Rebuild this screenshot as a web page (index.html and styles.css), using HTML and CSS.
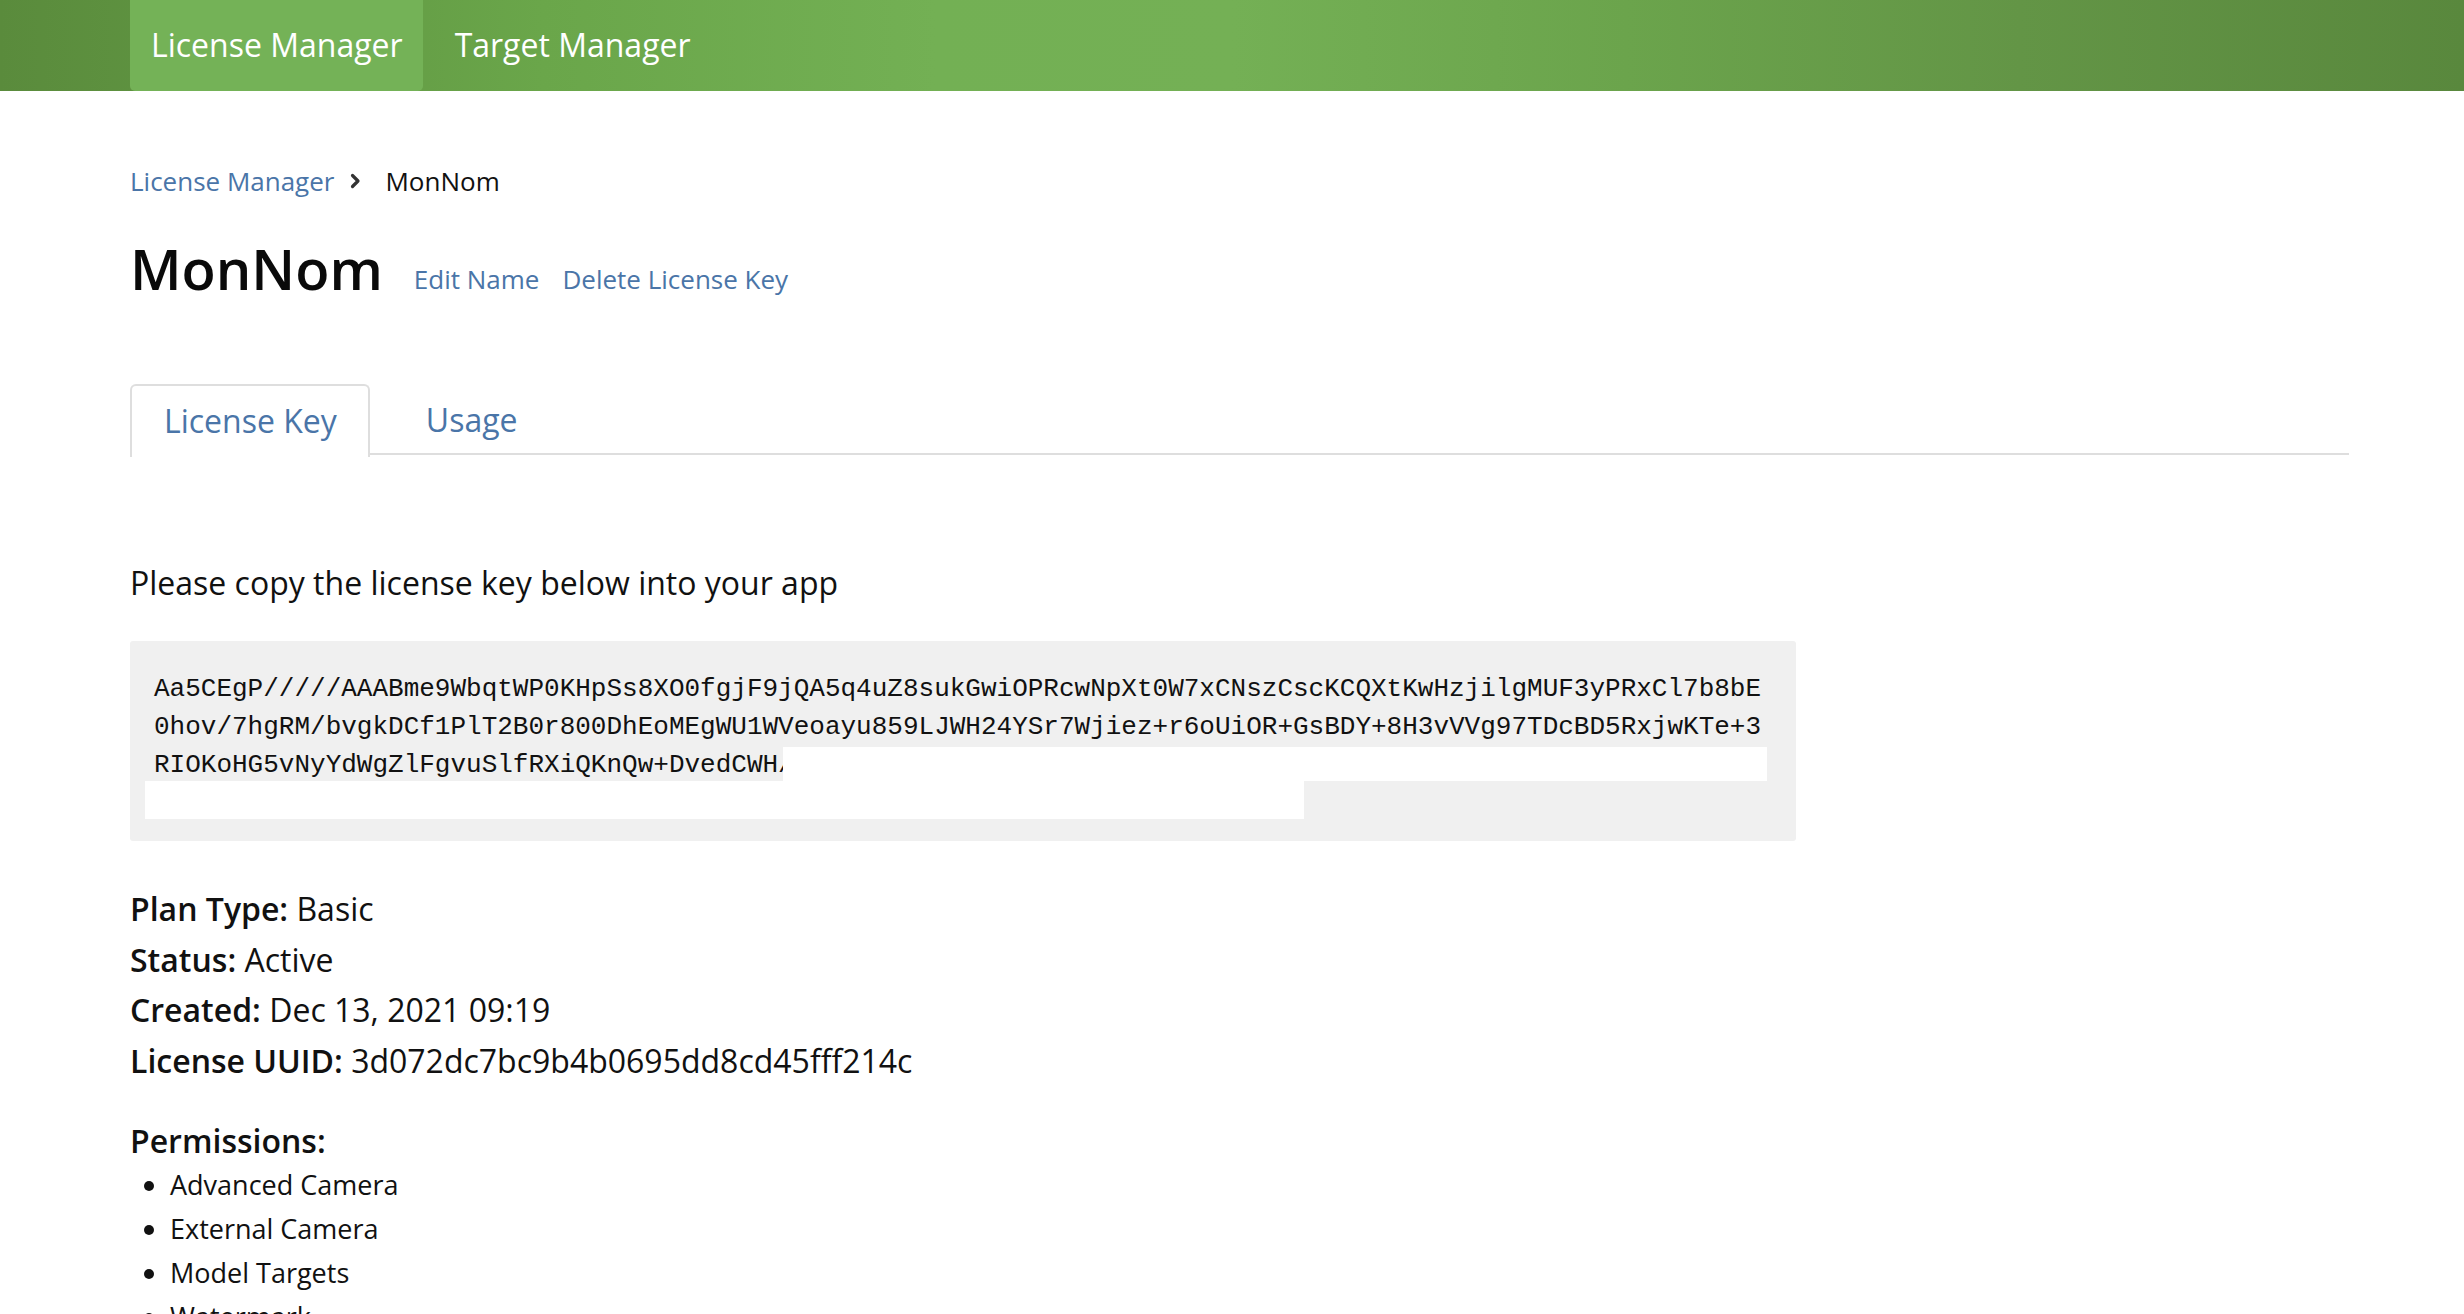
FILE: index.html
```html
<!DOCTYPE html>
<html lang="en">
<head>
<meta charset="utf-8">
<title>MonNom - License Manager</title>
<link rel="stylesheet" href="styles.css">
</head>
<body>
<header class="topbar">
  <nav class="topnav">
    <a class="topnav-item is-active">License Manager</a>
    <a class="topnav-item">Target Manager</a>
  </nav>
</header>
<main class="page">
  <div class="breadcrumb">
    <a class="crumb-link">License Manager</a>
    <svg class="crumb-sep" viewBox="0 0 12 18" width="12" height="18" aria-hidden="true"><path d="M3.5 3.5 L9 9 L3.5 14.5" fill="none" stroke="#333" stroke-width="3.2" stroke-linecap="round" stroke-linejoin="round"/></svg>
    <span class="crumb-current">MonNom</span>
  </div>
  <div class="title-row">
    <h1 class="title">MonNom</h1>
    <a class="title-action">Edit Name</a>
    <a class="title-action">Delete License Key</a>
  </div>
  <ul class="tabs">
    <li class="tab is-active">License Key</li>
    <li class="tab">Usage</li>
  </ul>
  <p class="intro">Please copy the license key below into your app</p>
  <div class="keybox">
    <div class="keytext">Aa5CEgP/////AAABme9WbqtWP0KHpSs8XO0fgjF9jQA5q4uZ8sukGwiOPRcwNpXt0W7xCNszCscKCQXtKwHzjilgMUF3yPRxCl7b8bE0hov/7hgRM/bvgkDCf1PlT2B0r800DhEoMEgWU1WVeoayu859LJWH24YSr7Wjiez+r6oUiOR+GsBDY+8H3vVVg97TDcBD5RxjwKTe+3RIOKoHG5vNyYdWgZlFgvuSlfRXiQKnQw+DvedCWH/<span class="redact-inline"></span></div>
    <div class="redact-block"></div>
  </div>
  <div class="details">
    <div class="detail"><span class="detail-label">Plan Type:</span> Basic</div>
    <div class="detail"><span class="detail-label">Status:</span> Active</div>
    <div class="detail"><span class="detail-label">Created:</span> Dec 13, 2021 09:19</div>
    <div class="detail"><span class="detail-label">License UUID:</span> 3d072dc7bc9b4b0695dd8cd45fff214c</div>
  </div>
  <h3 class="perm-title">Permissions:</h3>
  <ul class="perm-list">
    <li>Advanced Camera</li>
    <li>External Camera</li>
    <li>Model Targets</li>
    <li>Watermark</li>
  </ul>
</main>
</body>
</html>
```
FILE: styles.css
```css
html, body {
  margin: 0;
  padding: 0;
  background: #fff;
}
body {
  font-family: "Open Sans", "Noto Sans", sans-serif;
  color: #111;
  overflow: hidden;
  height: 1314px;
}
a { text-decoration: none; cursor: pointer; }

.topbar {
  height: 91px;
  background: linear-gradient(90deg, #5a8b3c 0%, #5f9441 8%, #6aa64a 22%, #73b054 38%, #74b055 50%, #6ba44c 66%, #639546 82%, #59883d 100%);
}
.topnav {
  display: flex;
  gap: 11px;
  height: 91px;
  padding-left: 130px;
}
.topnav-item {
  display: flex;
  align-items: center;
  padding: 0 20px 2px 21px;
  color: #fff;
  font-size: 32px;
  border-radius: 0 0 5px 5px;
}
.topnav-item.is-active {
  background: #74b257;
}

.page {
  padding-left: 130px;
  width: 2219px;
}

.breadcrumb {
  display: flex;
  align-items: center;
  margin-top: 71px;
  height: 38px;
  font-size: 26px;
}
.crumb-link { color: #4a75a8; }
.crumb-sep { margin: 0 24px 0 15px; width: 12px; height: 18px; }
.crumb-current { color: #111; }

.title-row {
  display: flex;
  align-items: baseline;
  margin-top: 34px;
  height: 68px;
}
.title {
  margin: 0 31px 0 0;
  font-size: 56px;
  font-weight: 600;
  line-height: 68px;
  color: #0a0a0a;
}
.title-action {
  color: #4a75a8;
  font-size: 26px;
  margin-right: 23px;
  position: relative;
  top: -1px;
}

.tabs {
  display: flex;
  gap: 22px;
  list-style: none;
  margin: 82px 0 0 0;
  padding: 0;
  border-bottom: 2px solid #dedede;
  height: 69px;
}
.tab {
  display: flex;
  align-items: center;
  padding: 0 31px 2px 32px;
  font-size: 32px;
  color: #4a75a8;
  border: 2px solid transparent;
  border-bottom: none;
  border-radius: 6px 6px 0 0;
  margin-bottom: -2px;
}
.tab.is-active {
  border-color: #dedede;
  background: #fff;
  height: 69px;
}

.intro {
  margin: 107px 0 0 0;
  font-size: 32px;
  line-height: 42px;
}

.keybox {
  margin-top: 37px;
  width: 1666px;
  box-sizing: border-box;
  background: #f0f0f0;
  padding: 29px 26px 22px 24px;
  border-radius: 3px;
}
.keytext {
  font-family: "Courier New", "Nimbus Mono PS", "Nimbus Mono L", "FreeMono", "Liberation Mono", monospace;
  font-size: 26px;
  line-height: 38px;
  word-break: break-all;
  color: #111;
}
.redact-inline {
  display: inline-block;
  width: 984px;
  height: 34px;
  margin-left: -11px;
  background: #fff;
  vertical-align: -9px;
}
.redact-block {
  width: 1159px;
  height: 38px;
  margin: -3px 0 0 -9px;
  background: #fff;
  position: relative;
}

.details {
  margin-top: 43px;
}
.detail {
  font-size: 32px;
  line-height: 50.5px;
}
.detail-label {
  font-weight: 600;
}

.perm-title {
  margin: 30px 0 0 0;
  font-size: 32px;
  font-weight: 600;
  line-height: 50px;
}
.perm-list {
  margin: -3px 0 0 0;
  padding-left: 40px;
  font-size: 27px;
  line-height: 44px;
}
```
